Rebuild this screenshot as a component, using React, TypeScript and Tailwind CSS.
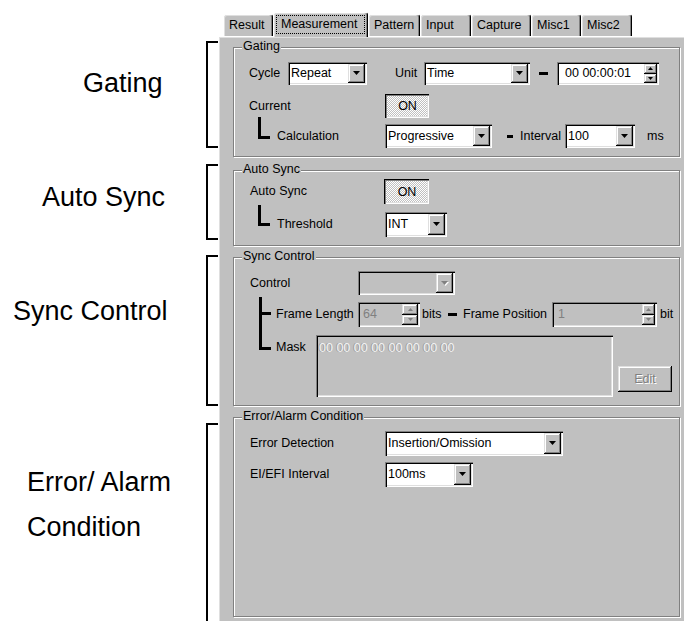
import type { ReactNode } from 'react';

const sunken =
    'shadow-[inset_1px_1px_0_#808080,inset_2px_2px_0_#000,inset_-1px_-1px_0_#fff,inset_-2px_-2px_0_#dfdfdf]';
const raised =
    'shadow-[inset_-1px_-1px_0_#000,inset_1px_1px_0_#dfdfdf,inset_-2px_-2px_0_#808080,inset_2px_2px_0_#fff]';
const pressed =
    'shadow-[inset_1px_1px_0_#000,inset_2px_2px_0_#808080,inset_-1px_-1px_0_#fff,inset_-2px_-2px_0_#dfdfdf]';

function DownArrow({ disabled }: { disabled?: boolean }) {
    return (
        <svg width="8" height="5" viewBox="0 0 8 5" className="block">
            {disabled && <polygon points="1,1 8,1 4.5,5" fill="#fff" />}
            <polygon points="0,0 7,0 3.5,4" fill={disabled ? '#808080' : '#000'} />
        </svg>
    );
}

function Combo({ value, className, disabled }: { value?: string; className: string; disabled?: boolean }) {
    return (
        <div className={`${className} flex p-[2px] ${sunken} ${disabled ? 'bg-[#c0c0c0]' : 'bg-white'}`}>
            <span className="flex-1 self-center pl-[1px] leading-[15px] whitespace-nowrap overflow-hidden">
                {value}
            </span>
            <span className={`w-[17px] shrink-0 flex items-center justify-center bg-[#c0c0c0] ${raised}`}>
                <DownArrow disabled={disabled} />
            </span>
        </div>
    );
}

function SpinButton({ up, disabled }: { up?: boolean; disabled?: boolean }) {
    return (
        <span className={`flex-1 flex items-center justify-center bg-[#c0c0c0] ${raised}`}>
            <svg width="5" height="3" viewBox="0 0 5 3" className="block">
                <polygon
                    points={up ? '0,3 5,3 2.5,0' : '0,0 5,0 2.5,3'}
                    fill={disabled ? '#808080' : '#000'}
                />
            </svg>
        </span>
    );
}

function Spinner({
    value,
    className,
    textPad,
    btn,
    disabled,
}: {
    value: string;
    className: string;
    textPad: string;
    btn: string;
    disabled?: boolean;
}) {
    return (
        <div
            className={`${className} flex p-[2px] ${sunken} ${
                disabled ? 'bg-[#c0c0c0] text-[#808080]' : 'bg-white'
            }`}
        >
            <span className={`flex-1 self-center leading-[15px] whitespace-nowrap ${textPad}`}>{value}</span>
            <span className={`${btn} shrink-0 flex flex-col`}>
                <SpinButton up disabled={disabled} />
                <SpinButton disabled={disabled} />
            </span>
        </div>
    );
}

function Toggle({ className }: { className: string }) {
    return (
        <div
            className={`${className} flex items-center justify-center pl-[1px] pt-[1px] ${pressed} bg-[image:repeating-conic-gradient(#fff_0_25%,#c0c0c0_0_50%)] bg-size-[2px_2px]`}
        >
            ON
        </div>
    );
}

function Dash({ className }: { className: string }) {
    return <div className={`${className} h-[3px] bg-black shrink-0`} />;
}

function GroupBox({ title, className, children }: { title: string; className: string; children: ReactNode }) {
    return (
        <div
            className={`${className} relative border border-[#808080] shadow-[inset_1px_1px_0_#fff,1px_1px_0_#fff]`}
        >
            <span className="absolute -top-[9px] left-[8px] px-[1px] bg-[#c0c0c0] leading-[15px]">{title}</span>
            {children}
        </div>
    );
}

const tabs = [
    { label: 'Result', cls: 'w-[50px]' },
    { label: 'Measurement', cls: 'w-[95px]', selected: true },
    { label: 'Pattern', cls: 'w-[52px]' },
    { label: 'Input', cls: 'w-[51px]' },
    { label: 'Capture', cls: 'w-[60px]' },
    { label: 'Misc1', cls: 'w-[50px]' },
    { label: 'Misc2', cls: 'w-[51px]' },
];

function TabBar() {
    return (
        <div className="h-[36px] flex items-end pl-[5px]">
            {tabs.map((t) =>
                t.selected ? (
                    <div
                        key={t.label}
                        className={`${t.cls} h-[25px] -mb-px relative z-10 bg-[#c0c0c0] rounded-t-[3px] border-l border-t border-white border-r border-r-black shadow-[inset_-1px_0_0_#808080,inset_1px_1px_0_#dfdfdf] px-[2px] pt-[2px] pb-[3px]`}
                    >
                        <div className="h-full border border-dotted border-black flex items-center pl-[4px] leading-[15px]">
                            {t.label}
                        </div>
                    </div>
                ) : (
                    <div
                        key={t.label}
                        className={`${t.cls} h-[22px] bg-[#c0c0c0] rounded-t-[3px] border-l border-t border-white border-r border-r-black shadow-[inset_-1px_0_0_#808080,inset_1px_1px_0_#dfdfdf] flex items-center pl-[5px] leading-[15px]`}
                    >
                        {t.label}
                    </div>
                ),
            )}
        </div>
    );
}

function Bracket({ className, open }: { className: string; open?: boolean }) {
    return (
        <div
            className={`${className} w-[12px] shrink-0 border-l-2 border-t-2 border-black ${open ? '' : 'border-b-2'}`}
        />
    );
}

function SideLabels() {
    return (
        <div className="w-[218px] shrink-0 flex flex-col pt-[41px] text-[27px] text-black">
            <div className="flex h-[108px]">
                <div className="flex-1 pt-[26px] pl-[83px] leading-[32px]">Gating</div>
                <Bracket className="h-full" />
            </div>
            <div className="flex h-[77px] mt-[16px]">
                <div className="flex-1 pt-[17px] pl-[42px] leading-[32px]">Auto Sync</div>
                <Bracket className="h-full" />
            </div>
            <div className="flex h-[153px] mt-[15px]">
                <div className="flex-1 pt-[40px] pl-[13px] leading-[32px] whitespace-nowrap">Sync Control</div>
                <Bracket className="h-full" />
            </div>
            <div className="flex h-[200px] mt-[17px]">
                <div className="flex-1 pt-[37px] pl-[27px] leading-[45px]">
                    Error/ Alarm
                    <br />
                    Condition
                </div>
                <Bracket className="h-full" open />
            </div>
        </div>
    );
}

export default function App() {
    return (
        <div className="w-[684px] h-[621px] overflow-hidden bg-white flex font-['Liberation_Sans',Arial,sans-serif] text-[12.5px] text-black">
            <SideLabels />
            <div className="flex-1 min-w-0 flex flex-col">
                <TabBar />
                <div className="flex-1 bg-[#c0c0c0] border-l border-t border-white shadow-[inset_1px_1px_0_#dfdfdf] pl-[14px] pr-[4px] pt-[10px] flex flex-col">
                    <GroupBox title="Gating" className="h-[110px] pl-[15px] pt-[14px]">
                        <div className="flex items-center h-[23px]">
                            <span className="w-[39px] shrink-0">Cycle</span>
                            <Combo value="Repeat" className="w-[79px] h-[23px] shrink-0" />
                            <span className="ml-[28px] w-[29px] shrink-0">Unit</span>
                            <Combo value="Time" className="w-[106px] h-[23px] shrink-0" />
                            <Dash className="ml-[9px] w-[9px]" />
                            <Spinner
                                value="00 00:00:01"
                                className="ml-[9px] w-[102px] h-[23px] shrink-0"
                                textPad="pl-[6px]"
                                btn="w-[13px]"
                            />
                        </div>
                        <div className="flex items-center h-[24px] mt-[9px]">
                            <span className="w-[136px] shrink-0">Current</span>
                            <Toggle className="w-[44px] h-[24px] shrink-0" />
                        </div>
                        <div className="flex items-center h-[24px] mt-[6px]">
                            <div className="ml-[9px] w-[12px] h-[22px] self-start -mt-[7px] shrink-0 border-l-[3px] border-b-[3px] border-black" />
                            <span className="ml-[7px] w-[108px] shrink-0">Calculation</span>
                            <Combo value="Progressive" className="w-[107px] h-[24px] shrink-0" />
                            <Dash className="ml-[15px] w-[6px]" />
                            <span className="ml-[7px] w-[45px] shrink-0">Interval</span>
                            <Combo value="100" className="w-[70px] h-[24px] shrink-0" />
                            <span className="ml-[12px]">ms</span>
                        </div>
                    </GroupBox>

                    <GroupBox title="Auto Sync" className="h-[76px] mt-[13px] pl-[16px] pt-[8px]">
                        <div className="flex items-center h-[25px]">
                            <span className="w-[134px] shrink-0">Auto Sync</span>
                            <Toggle className="w-[45px] h-[25px] shrink-0" />
                        </div>
                        <div className="flex items-center h-[25px] mt-[8px]">
                            <div className="ml-[8px] w-[12px] h-[21px] self-start -mt-[7px] shrink-0 border-l-[3px] border-b-[3px] border-black" />
                            <span className="ml-[7px] w-[108px] shrink-0">Threshold</span>
                            <Combo value="INT" className="w-[62px] h-[25px] shrink-0" />
                        </div>
                    </GroupBox>

                    <GroupBox title="Sync Control" className="h-[149px] mt-[11px] pl-[16px] pt-[13px]">
                        <div className="flex items-center h-[24px]">
                            <span className="w-[108px] shrink-0">Control</span>
                            <Combo className="w-[97px] h-[24px] shrink-0" disabled />
                        </div>
                        <div className="flex mt-[2px]">
                            <svg width="12" height="53" viewBox="0 0 12 53" className="ml-[9px] shrink-0 block">
                                <rect x="0" y="0" width="3" height="53" fill="#000" />
                                <rect x="0" y="15" width="12" height="3" fill="#000" />
                                <rect x="0" y="50" width="12" height="3" fill="#000" />
                            </svg>
                            <div className="ml-[5px] pt-[5px] flex flex-col">
                                <div className="flex items-center h-[25px]">
                                    <span className="w-[82px] shrink-0 whitespace-nowrap">Frame Length</span>
                                    <Spinner
                                        value="64"
                                        className="w-[62px] h-[25px] shrink-0"
                                        textPad="pl-[3px]"
                                        btn="w-[16px]"
                                        disabled
                                    />
                                    <span className="ml-[2px] w-[20px] shrink-0">bits</span>
                                    <Dash className="ml-[6px] w-[9px]" />
                                    <span className="ml-[6px] w-[89px] shrink-0 whitespace-nowrap">Frame Position</span>
                                    <Spinner
                                        value="1"
                                        className="w-[105px] h-[25px] shrink-0"
                                        textPad="pl-[4px]"
                                        btn="w-[13px]"
                                        disabled
                                    />
                                    <span className="ml-[3px]">bit</span>
                                </div>
                                <div className="flex items-start mt-[8px]">
                                    <span className="w-[40px] shrink-0 mt-[5px] leading-[15px]">Mask</span>
                                    <div
                                        className={`w-[297px] h-[62px] shrink-0 bg-[#c0c0c0] ${sunken} pt-[6px] pl-[3px] leading-[15px] text-[#f2f2f2] [text-shadow:-1px_0_0_#9a9a9a]`}
                                    >
                                        00 00 00 00 00 00 00 00
                                    </div>
                                    <div
                                        className={`ml-[5px] w-[54px] h-[26px] shrink-0 self-end mb-[5px] flex items-center justify-center bg-[#c0c0c0] ${raised} text-[#808080] [text-shadow:1px_1px_0_#fff]`}
                                    >
                                        Edit
                                    </div>
                                </div>
                            </div>
                        </div>
                    </GroupBox>

                    <GroupBox title="Error/Alarm Condition" className="h-[200px] mt-[11px] pl-[16px] pt-[13px]">
                        <div className="flex items-center h-[25px]">
                            <span className="w-[135px] shrink-0">Error Detection</span>
                            <Combo value="Insertion/Omission" className="w-[178px] h-[25px] shrink-0" />
                        </div>
                        <div className="flex items-center h-[25px] mt-[6px]">
                            <span className="w-[135px] shrink-0">EI/EFI Interval</span>
                            <Combo value="100ms" className="w-[88px] h-[25px] shrink-0" />
                        </div>
                    </GroupBox>
                </div>
            </div>
        </div>
    );
}
